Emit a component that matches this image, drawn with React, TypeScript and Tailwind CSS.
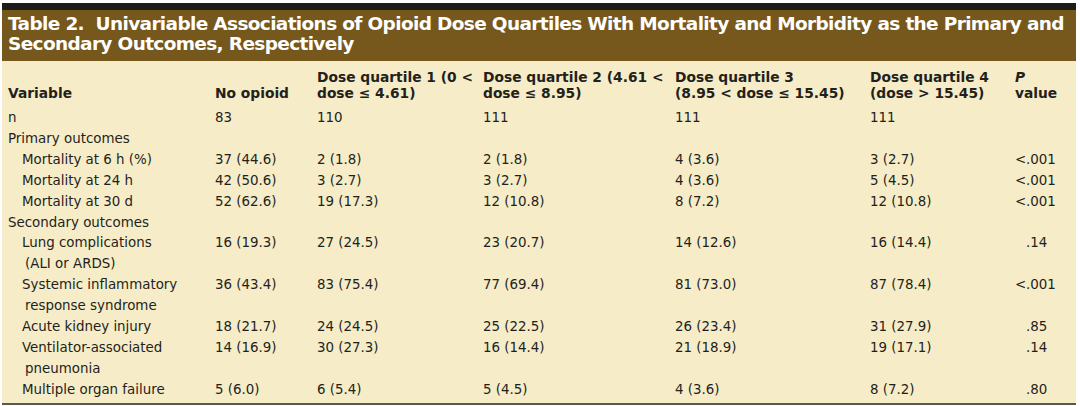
import React from "react";

type Row = {
  label: string[];
  indent?: boolean;
  values?: string[];
  p?: string;
};

const rows: Row[] = [
  { label: ["n"], values: ["83", "110", "111", "111", "111"] },
  { label: ["Primary outcomes"] },
  { label: ["Mortality at 6 h (%)"], indent: true, values: ["37 (44.6)", "2 (1.8)", "2 (1.8)", "4 (3.6)", "3 (2.7)"], p: "<.001" },
  { label: ["Mortality at 24 h"], indent: true, values: ["42 (50.6)", "3 (2.7)", "3 (2.7)", "4 (3.6)", "5 (4.5)"], p: "<.001" },
  { label: ["Mortality at 30 d"], indent: true, values: ["52 (62.6)", "19 (17.3)", "12 (10.8)", "8 (7.2)", "12 (10.8)"], p: "<.001" },
  { label: ["Secondary outcomes"] },
  { label: ["Lung complications", "(ALI or ARDS)"], indent: true, values: ["16 (19.3)", "27 (24.5)", "23 (20.7)", "14 (12.6)", "16 (14.4)"], p: ".14" },
  { label: ["Systemic inflammatory", "response syndrome"], indent: true, values: ["36 (43.4)", "83 (75.4)", "77 (69.4)", "81 (73.0)", "87 (78.4)"], p: "<.001" },
  { label: ["Acute kidney injury"], indent: true, values: ["18 (21.7)", "24 (24.5)", "25 (22.5)", "26 (23.4)", "31 (27.9)"], p: ".85" },
  { label: ["Ventilator-associated", "pneumonia"], indent: true, values: ["14 (16.9)", "30 (27.3)", "16 (14.4)", "21 (18.9)", "19 (17.1)"], p: ".14" },
  { label: ["Multiple organ failure"], indent: true, values: ["5 (6.0)", "6 (5.4)", "5 (4.5)", "4 (3.6)", "8 (7.2)"], p: ".80" },
];

const grid = "grid grid-cols-[207px_102px_166px_192px_195px_145px_1fr]";

// p values line up on the decimal point
function PValue({ v }: { v?: string }) {
  if (!v) return null;
  const lead = v.startsWith("<") ? "<" : "";
  const rest = lead ? v.slice(1) : v;
  return (
    <div>
      <span className="inline-block w-[11px] text-right">{lead}</span>
      {rest}
    </div>
  );
}

export default function App() {
  return (
    <div className="w-[1080px] h-[406px] bg-white pt-[3px] pl-[2px] font-['DejaVu_Sans',Verdana,sans-serif] text-[#231f1c]">
      <div className="w-[1074px]">
        <div className="h-[7px] bg-[#1e1c19]" />
        <div className="h-[51px] bg-[#76581d] px-[6px] pt-[4px] text-white font-bold text-[18.5px] leading-[20px] tracking-[-0.65px] whitespace-nowrap">
          <div>Table 2.&nbsp; Univariable Associations of Opioid Dose Quartiles With Mortality and Morbidity as the Primary and</div>
          <div>Secondary Outcomes, Respectively</div>
        </div>
        <div className="bg-[#f6ecc7] border-b-2 border-[#5a5650] pl-[6px] pb-[2px] text-[13.4px]">
          <div className={`${grid} font-bold text-[13.8px] leading-[16px] pt-[8px] pb-[7px] whitespace-nowrap`}>
            <div className="flex flex-col justify-end">Variable</div>
            <div className="flex flex-col justify-end">No opioid</div>
            <div>
              <div>Dose quartile 1 (0 &lt;</div>
              <div>dose ≤ 4.61)</div>
            </div>
            <div>
              <div>Dose quartile 2 (4.61 &lt;</div>
              <div>dose ≤ 8.95)</div>
            </div>
            <div>
              <div>Dose quartile 3</div>
              <div>(8.95 &lt; dose ≤ 15.45)</div>
            </div>
            <div>
              <div>Dose quartile 4</div>
              <div>(dose &gt; 15.45)</div>
            </div>
            <div>
              <div className="italic">P</div>
              <div>value</div>
            </div>
          </div>
          {rows.map((r, i) => (
            <div key={i} className={`${grid} leading-[20.9px] whitespace-nowrap`}>
              <div className={r.indent ? "pl-[14px]" : ""}>
                {r.label.map((l, j) => (
                  <div key={j} className={j > 0 ? "pl-[3px]" : ""}>
                    {l}
                  </div>
                ))}
              </div>
              {[0, 1, 2, 3, 4].map((c) => (
                <div key={c}>{r.values ? r.values[c] : ""}</div>
              ))}
              <PValue v={r.p} />
            </div>
          ))}
        </div>
      </div>
    </div>
  );
}
